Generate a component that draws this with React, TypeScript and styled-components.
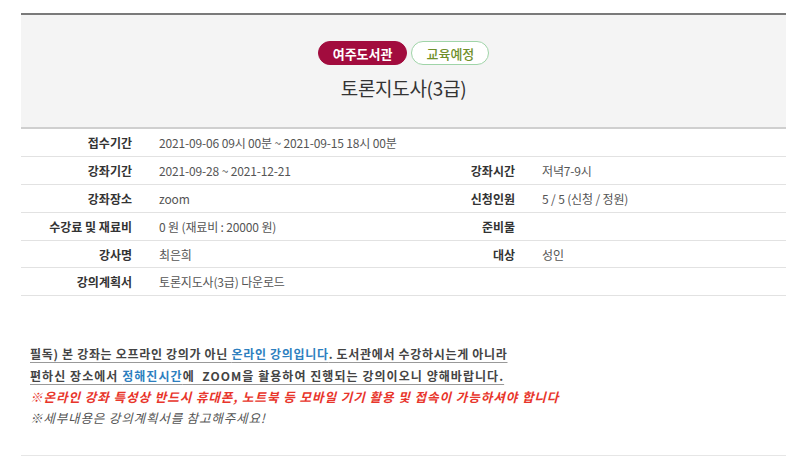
import React from "react";
import styled, { createGlobalStyle } from "styled-components";

const Global = createGlobalStyle`
  html, body { margin: 0; padding: 0; background: #fff; }
  body { font-family: "Noto Sans CJK KR", "Noto Sans", sans-serif; color: #555; }
`;

const Page = styled.div`
  padding: 13px 14px 0 21px;
  width: 765px;
`;

const Header = styled.div`
  border-top: 2px solid #7a7a7a;
  border-bottom: 2px solid #cfcfcf;
  background: #f4f4f4;
  height: 116px;
  display: flex;
  flex-direction: column;
  align-items: center;
  padding-top: 26px;
  box-sizing: border-box;
`;

const Badges = styled.div`
  display: flex;
  gap: 4px;
`;

const Badge = styled.span<{ $variant: "lib" | "status" }>`
  display: inline-flex;
  align-items: center;
  justify-content: center;
  height: 24px;
  padding: 0 14px;
  box-sizing: border-box;
  border-radius: 12px;
  font-size: 13px;
  font-weight: ${(p) => (p.$variant === "lib" ? 700 : 500)};
  background: ${(p) => (p.$variant === "lib" ? "#a20c3e" : "#fff")};
  color: ${(p) => (p.$variant === "lib" ? "#fff" : "#6f8f2a")};
  border: 1px solid ${(p) => (p.$variant === "lib" ? "#a20c3e" : "#9fd4a8")};
`;

const Title = styled.h2`
  margin: 9px 0 0;
  font-size: 19px;
  font-weight: 400;
  color: #333;
  letter-spacing: -0.3px;
`;

const Table = styled.table`
  width: 100%;
  border-collapse: collapse;
  table-layout: fixed;
  font-size: 12px;
`;

const Row = styled.tr`
  height: 27.8px;
  border-bottom: 1px solid #e2e2e2;
  & > * { height: 26.8px; }
`;

const Th = styled.th`
  text-align: right;
  padding: 0 13px 0 0;
  font-weight: 700;
  color: #333;
  box-sizing: border-box;
`;

const Td = styled.td`
  padding: 0 0 0 14px;
  color: #555;
  text-align: left;
  letter-spacing: -0.15px;
`;

const Notice = styled.div`
  margin-top: 47px;
  padding: 0 0 27px 9px;
  border-bottom: 1px solid #e6e6e6;
  font-size: 12px;
  line-height: 21.3px;
`;

const Line = styled.p<{ $tone: "strong" | "red" | "gray"; $spacing: number }>`
  margin: 0;
  font-weight: ${(p) => (p.$tone === "gray" ? 400 : 700)};
  font-style: ${(p) => (p.$tone === "strong" ? "normal" : "italic")};
  color: ${(p) => (p.$tone === "red" ? "#e8352b" : p.$tone === "gray" ? "#555" : "#444")};
  font-size: ${(p) => (p.$tone === "strong" ? "12px" : "12.6px")};
  letter-spacing: ${(p) => p.$spacing}px;
`;

const Under = styled.span`
  text-decoration: underline;
  text-decoration-color: #999;
  text-underline-offset: 3px;
`;

const Blue = styled.span`
  color: #2d7fbf;
`;

export default function App() {
  return (
    <>
      <Global />
      <Page>
        <Header>
          <Badges>
            <Badge $variant="lib">여주도서관</Badge>
            <Badge $variant="status">교육예정</Badge>
          </Badges>
          <Title>토론지도사(3급)</Title>
        </Header>
        <Table>
          <colgroup>
            <col style={{ width: 124 }} />
            <col style={{ width: 258 }} />
            <col style={{ width: 125 }} />
            <col />
          </colgroup>
          <tbody>
            <Row>
              <Th>접수기간</Th>
              <Td colSpan={3}>2021-09-06 09시 00분 ~ 2021-09-15 18시 00분</Td>
            </Row>
            <Row>
              <Th>강좌기간</Th>
              <Td>2021-09-28 ~ 2021-12-21</Td>
              <Th>강좌시간</Th>
              <Td>저녁7-9시</Td>
            </Row>
            <Row>
              <Th>강좌장소</Th>
              <Td>zoom</Td>
              <Th>신청인원</Th>
              <Td>5 / 5 (신청 / 정원)</Td>
            </Row>
            <Row>
              <Th>수강료 및 재료비</Th>
              <Td>0 원 (재료비 : 20000 원)</Td>
              <Th>준비물</Th>
              <Td></Td>
            </Row>
            <Row>
              <Th>강사명</Th>
              <Td>최은희</Td>
              <Th>대상</Th>
              <Td>성인</Td>
            </Row>
            <Row>
              <Th>강의계획서</Th>
              <Td colSpan={3}>토론지도사(3급) 다운로드</Td>
            </Row>
          </tbody>
        </Table>
        <Notice>
          <Line $tone="strong" $spacing={0.68}>
            <Under>
              필독) 본 강좌는 오프라인 강의가 아닌 <Blue>온라인 강의입니다</Blue>. 도서관에서 수강하시는게 아니라
            </Under>
          </Line>
          <Line $tone="strong" $spacing={1.05}>
            <Under>
              편하신 장소에서 <Blue>정해진시간</Blue>에 &nbsp;ZOOM을 활용하여 진행되는 강의이오니 양해바랍니다.
            </Under>
          </Line>
          <Line $tone="red" $spacing={0.9}>
            ※온라인 강좌 특성상 반드시 휴대폰, 노트북 등 모바일 기기 활용 및 접속이 가능하셔야 합니다
          </Line>
          <Line $tone="gray" $spacing={0.78}>
            ※세부내용은 강의계획서를 참고해주세요!
          </Line>
        </Notice>
      </Page>
    </>
  );
}
